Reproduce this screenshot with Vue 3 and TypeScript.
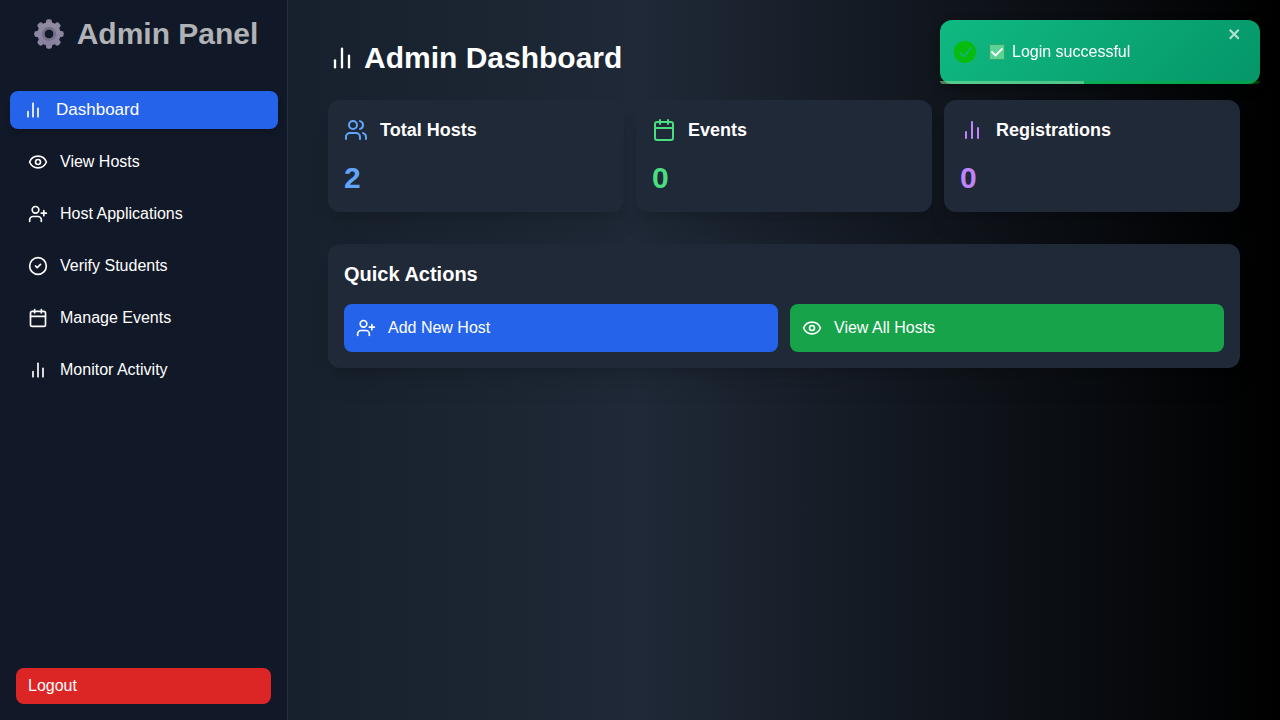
<script setup lang="ts">
import { h, ref, type FunctionalComponent } from 'vue'

type IconName = 'chart' | 'eye' | 'userPlus' | 'check' | 'calendar' | 'users'

const shapes: Record<IconName, string[]> = {
  chart: ['M18 20V10', 'M12 20V4', 'M6 20v-6'],
  eye: [
    'M2.062 12.348a1 1 0 0 1 0-.696 10.75 10.75 0 0 1 19.876 0 1 1 0 0 1 0 .696 10.75 10.75 0 0 1-19.876 0',
    'M15 12a3 3 0 1 1-6 0 3 3 0 0 1 6 0z',
  ],
  userPlus: ['M16 21v-2a4 4 0 0 0-4-4H6a4 4 0 0 0-4 4v2', 'M13 7a4 4 0 1 1-8 0 4 4 0 0 1 8 0z', 'M19 8v6', 'M22 11h-6'],
  check: ['M22 12a10 10 0 1 1-20 0 10 10 0 0 1 20 0z', 'm9 12 2 2 4-4'],
  calendar: ['M8 2v4', 'M16 2v4', 'M5 4h14a2 2 0 0 1 2 2v14a2 2 0 0 1-2 2H5a2 2 0 0 1-2-2V6a2 2 0 0 1 2-2z', 'M3 10h18'],
  users: [
    'M16 21v-2a4 4 0 0 0-4-4H6a4 4 0 0 0-4 4v2',
    'M13 7a4 4 0 1 1-8 0 4 4 0 0 1 8 0z',
    'M22 21v-2a4 4 0 0 0-3-3.87',
    'M16 3.13a4 4 0 0 1 0 7.75',
  ],
}

const Icon: FunctionalComponent<{ name: IconName; size: number }> = (props) =>
  h(
    'svg',
    {
      width: props.size,
      height: props.size,
      viewBox: '0 0 24 24',
      fill: 'none',
      stroke: 'currentColor',
      'stroke-width': 2,
      'stroke-linecap': 'round',
      'stroke-linejoin': 'round',
      'aria-hidden': 'true',
    },
    shapes[props.name].map((d) => h('path', { d })),
  )
Icon.props = ['name', 'size']

const links: { label: string; icon: IconName }[] = [
  { label: 'Dashboard', icon: 'chart' },
  { label: 'View Hosts', icon: 'eye' },
  { label: 'Host Applications', icon: 'userPlus' },
  { label: 'Verify Students', icon: 'check' },
  { label: 'Manage Events', icon: 'calendar' },
  { label: 'Monitor Activity', icon: 'chart' },
]
const active = ref('Dashboard')

const stats: { label: string; value: number; icon: IconName; tone: string }[] = [
  { label: 'Total Hosts', value: 2, icon: 'users', tone: 'blue' },
  { label: 'Events', value: 0, icon: 'calendar', tone: 'green' },
  { label: 'Registrations', value: 0, icon: 'chart', tone: 'purple' },
]

const toastOpen = ref(true)
const toastProgress = ref(45)
const teeth = [0, 45, 90, 135, 180, 225, 270, 315]
</script>

<template>
  <div class="layout">
    <aside class="sidebar">
      <h2 class="brand">
        <svg class="gear" viewBox="0 0 30 30" aria-hidden="true">
          <defs>
            <linearGradient id="gear-fill" x1="0" y1="0" x2="0" y2="30" gradientUnits="userSpaceOnUse">
              <stop offset="0" stop-color="#938fa3" />
              <stop offset="1" stop-color="#857c9f" />
            </linearGradient>
            <linearGradient id="gear-ring" x1="0" y1="8" x2="0" y2="22" gradientUnits="userSpaceOnUse">
              <stop offset="0" stop-color="#746e82" />
              <stop offset="1" stop-color="#77718a" />
            </linearGradient>
          </defs>
          <g fill="#8c869f">
            <rect v-for="a in teeth" :key="a" x="12" y="0.3" width="6" height="8" rx="2.2" :transform="`rotate(${a} 15 15)`" />
          </g>
          <circle cx="15" cy="15" r="8.2" fill="none" stroke="url(#gear-fill)" stroke-width="7" />
          <circle cx="15" cy="15" r="5.9" fill="none" stroke="url(#gear-ring)" stroke-width="2.600" />
        </svg>
        <span>Admin Panel</span>
      </h2>
      <nav class="nav">
        <a
          v-for="link in links"
          :key="link.label"
          href="#"
          class="link"
          :class="{ active: link.label === active }"
          @click.prevent="active = link.label"
        >
          <Icon :name="link.icon" :size="20" />
          <span>{{ link.label }}</span>
        </a>
      </nav>
      <button type="button" class="logout">Logout</button>
    </aside>

    <main class="main">
      <h1 class="title"><Icon name="chart" :size="28" /><span>Admin Dashboard</span></h1>

      <section class="stats">
        <article v-for="s in stats" :key="s.label" class="card" :class="s.tone">
          <div class="card-head">
            <Icon :name="s.icon" :size="24" />
            <h2>{{ s.label }}</h2>
          </div>
          <p class="value">{{ s.value }}</p>
        </article>
      </section>

      <section class="card">
        <h2 class="section-title">Quick Actions</h2>
        <div class="actions">
          <button type="button" class="action add"><Icon name="userPlus" :size="20" /><span>Add New Host</span></button>
          <button type="button" class="action view"><Icon name="eye" :size="20" /><span>View All Hosts</span></button>
        </div>
      </section>
    </main>

    <div v-if="toastOpen" class="toast" role="alert">
      <svg class="toast-icon" viewBox="0 0 24 24" aria-hidden="true">
        <path
          fill="#07bc0c"
          d="M12 0a12 12 0 1012 12A12.014 12.014 0 0012 0zm6.927 8.2l-6.845 9.289a1.011 1.011 0 01-1.43.188l-4.888-3.908a1 1 0 111.25-1.562l4.076 3.261 6.227-8.451a1 1 0 111.61 1.183z"
        />
      </svg>
      <svg class="tick-box" viewBox="0 0 16 16" aria-hidden="true">
        <rect x="0.5" y="0.5" width="15" height="15" fill="#5bd394" stroke="#37a66d" />
        <path d="M2.500 7.500l4 4L13.500 4.500" fill="none" stroke="#fff" stroke-width="1.8" />
      </svg>
      <span>Login successful</span>
      <button type="button" class="close" aria-label="Close" @click="toastOpen = false">
        <svg viewBox="0 0 14 16" aria-hidden="true">
          <path
            fill="currentColor"
            fill-rule="evenodd"
            d="M7.71 8.23l3.75 3.75-1.48 1.48-3.75-3.75-3.75 3.75L1 11.98l3.75-3.75L1 4.48 2.48 3l3.75 3.75L9.98 3l1.48 1.48-3.75 3.75z"
          />
        </svg>
      </button>
      <div class="progress"><div class="bar" :style="{ width: toastProgress + '%' }"></div></div>
    </div>
  </div>
</template>

<style>
body {
  margin: 0;
  background: #000;
}
</style>

<style scoped>
* {
  box-sizing: border-box;
}
.layout {
  display: flex;
  min-height: 100vh;
  background: linear-gradient(to right, #101923, #1f2937, #000);
  color: #fff;
  font: 16px/24px 'Liberation Sans', Arial, sans-serif;
}
h1,
h2,
p {
  margin: 0;
}
svg {
  display: block;
  flex: none;
}
button {
  border: 0;
  color: inherit;
  font: inherit;
  text-align: left;
  cursor: pointer;
}
.sidebar {
  display: flex;
  flex-direction: column;
  flex: none;
  width: 288px;
  padding: 16px;
  background: #111827;
  border-right: 1px solid #262f3d;
}
.brand {
  display: flex;
  align-items: center;
  justify-content: center;
  gap: 13px;
  padding-left: 5px;
  font-size: 30px;
  line-height: 36px;
  color: #b0b2b6;
}
.gear {
  width: 30px;
  height: 30px;
}
.nav {
  display: flex;
  flex-direction: column;
  gap: 12px;
  flex: 1;
  margin-top: 38px;
}
.link {
  display: flex;
  align-items: center;
  gap: 12px;
  padding: 8px 12px;
  border-radius: 8px;
  color: inherit;
  text-decoration: none;
}
.link.active {
  gap: 13px;
  margin: 1px -7px 1px -6px;
  padding: 6px 13px;
  background: #2563eb;
  font-size: 17px;
  line-height: 26px;
  box-shadow: 0 4px 6px -1px rgb(0 0 0 / 0.2);
}
.logout {
  padding: 6px 12px;
  border-radius: 8px;
  background: #dc2626;
}
.main {
  flex: 1;
  min-width: 0;
  padding: 40px;
}
.title {
  display: flex;
  align-items: center;
  gap: 8px;
  margin-bottom: 24px;
  font-size: 30px;
  line-height: 36px;
}
.stats {
  display: grid;
  grid-template-columns: repeat(3, 1fr);
  gap: 12px;
  margin-bottom: 32px;
}
.card {
  padding: 16px;
  border-radius: 12px;
  background: #1f2937;
  box-shadow: 0 20px 25px -5px rgb(0 0 0 / 0.1), 0 8px 10px -6px rgb(0 0 0 / 0.1);
}
.card-head {
  display: flex;
  align-items: center;
  gap: 12px;
  margin-bottom: 16px;
}
.card-head h2 {
  color: #fff;
  font-size: 18px;
  line-height: 28px;
}
.value {
  font-size: 30px;
  line-height: 36px;
  font-weight: 700;
}
.blue {
  color: #60a5fa;
}
.green {
  color: #4ade80;
}
.purple {
  color: #c084fc;
}
.section-title {
  margin-bottom: 16px;
  font-size: 20px;
  line-height: 28px;
}
.actions {
  display: grid;
  grid-template-columns: repeat(2, 1fr);
  gap: 12px;
}
.action {
  display: flex;
  align-items: center;
  gap: 12px;
  padding: 12px;
  border-radius: 8px;
}
.add {
  background: #2563eb;
}
.view {
  background: #16a34a;
}
.toast {
  position: fixed;
  top: 20px;
  right: 20px;
  display: flex;
  align-items: center;
  width: 320px;
  height: 64px;
  padding: 0 14px;
  border-radius: 12px;
  background: linear-gradient(135deg, #10b981, #059669);
  box-shadow: 0 4px 12px rgb(0 0 0 / 0.3);
}
.toast-icon {
  width: 22px;
  height: 22px;
  margin-right: 13px;
}
.tick-box {
  width: 16px;
  height: 16px;
  margin-right: 7px;
}
.close {
  position: absolute;
  top: 6px;
  right: 18px;
  padding: 0;
  background: transparent;
  opacity: 0.7;
}
.close svg {
  width: 14px;
  height: 16px;
}
.progress {
  position: absolute;
  inset: auto 0 0;
  height: 3px;
  border-radius: 0 0 6px 6px;
  overflow: hidden;
  background: rgb(7 188 12 / 0.3);
}
.bar {
  height: 100%;
  background: rgb(255 255 255 / 0.3);
}
</style>
